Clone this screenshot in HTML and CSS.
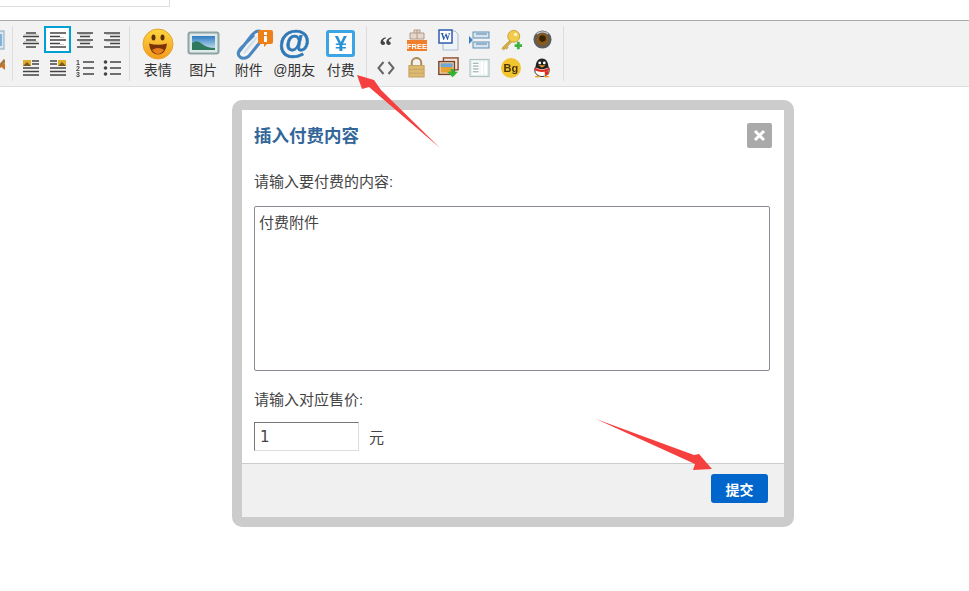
FILE: index.html
```html
<!DOCTYPE html>
<html lang="zh">
<head>
<meta charset="utf-8">
<title>插入付费内容</title>
<link rel="stylesheet" href="styles.css">
</head>
<body>
<div class="top"><div class="title-box"></div></div>
<div class="toolbar">
  <div class="group first">
    <div class="clip">
      <svg class="i" width="20" height="20" viewBox="0 0 20 20"><rect x="1" y="1" width="18" height="18" fill="#d7e6f2" stroke="#8fa9b8"/><rect x="3" y="4" width="14" height="12" fill="#7fb4d8"/></svg>
      <svg class="i" width="20" height="20" viewBox="0 0 20 20"><path d="M10 14L20 2" stroke="#a8773a" stroke-width="3"/><path d="M15 8l5-3v7z" fill="#c9762c"/></svg>
    </div>
  </div>
  <div class="sep"></div>
  <div class="group aligns">
    <div class="cell"><svg width="16" height="16" viewBox="0 0 16 16"><path d="M3 1h10M0 4.500h16M3 8h10M0 11.500h16M3 15h10" stroke="#444" stroke-width="1.300" fill="none"/><path d="M1 2.500h14M1 9.500h14" stroke="#ccc"/></svg></div>
    <div class="cell on"><svg width="18" height="16" viewBox="0 0 18 16"><path d="M1 1h16M1 4.500h10M1 8h16M1 11.500h10M1 15h16" stroke="#444" stroke-width="1.300" fill="none"/><path d="M11 5.500h4M11 12.500h4" stroke="#ccc"/></svg></div>
    <div class="cell"><svg width="16" height="16" viewBox="0 0 16 16"><path d="M0 1h16M3 4.500h10M0 8h16M3 11.500h10M0 15h16" stroke="#444" stroke-width="1.300" fill="none"/><path d="M2 2.500h12M2 9.500h12" stroke="#ccc"/></svg></div>
    <div class="cell"><svg width="16" height="16" viewBox="0 0 16 16"><path d="M0 1h16M6 4.500h10M0 8h16M6 11.500h10M0 15h16" stroke="#444" stroke-width="1.300" fill="none"/><path d="M2 2.500h14M2 9.500h14" stroke="#ccc"/></svg></div>
    <div class="cell"><svg width="16" height="16" viewBox="0 0 16 16"><rect x="0" y="0" width="8" height="6" fill="#e0ae28"/><path d="M0 6L4 2L8 6Z" fill="#7a5a20"/><path d="M9 1h7M9 4h7M0 8h16M0 11.500h16M0 15h16" stroke="#444" stroke-width="1.300"/></svg></div>
    <div class="cell"><svg width="16" height="16" viewBox="0 0 16 16"><rect x="8" y="0" width="8" height="6" fill="#e0ae28"/><path d="M8 6L12 2L16 6Z" fill="#7a5a20"/><path d="M0 1h7M0 4h7M0 8h16M0 11.500h16M0 15h16" stroke="#444" stroke-width="1.300"/></svg></div>
    <div class="cell"><svg width="18" height="18" viewBox="0 0 18 18"><text x="0" y="6" class="num">1</text><text x="0" y="12" class="num">2</text><text x="0" y="18" class="num">3</text><path d="M7 3h11M7 9h11M7 15h11" stroke="#444" stroke-width="1.300"/></svg></div>
    <div class="cell"><svg width="18" height="18" viewBox="0 0 18 18"><circle cx="2.500" cy="3" r="1.800" fill="#444"/><circle cx="2.500" cy="9" r="1.800" fill="#444"/><circle cx="2.500" cy="15" r="1.800" fill="#444"/><path d="M7 3h11M7 9h11M7 15h11" stroke="#444" stroke-width="1.300"/></svg></div>
  </div>
  <div class="sep"></div>
  <div class="group bigs">
    <div class="big">
      <svg width="32" height="34" viewBox="0 0 32 34"><defs><linearGradient id="sm" x1="0" y1="0" x2="0" y2="1"><stop offset="0" stop-color="#fcd640"/><stop offset="1" stop-color="#f39c1c"/></linearGradient></defs><circle cx="16" cy="18" r="15" fill="url(#sm)" stroke="#e8a030"/><ellipse cx="11.500" cy="11.500" rx="2" ry="3" fill="#5a3200"/><ellipse cx="20.500" cy="11.500" rx="2" ry="3" fill="#5a3200"/><path d="M7 17.500Q16 20 25 17.500Q24 28 16 28.500Q8 28 7 17.500Z" fill="#7a3208"/><path d="M10 24Q16 20 22 24Q19 28 16 28Q13 28 10 24Z" fill="#e8801c"/></svg>
      <span>表情</span>
    </div>
    <div class="big">
      <svg width="33" height="34" viewBox="0 0 33 34"><defs><linearGradient id="sky" x1="0" y1="0" x2="0" y2="1"><stop offset="0" stop-color="#2f7cc4"/><stop offset="1" stop-color="#cfe6ee"/></linearGradient></defs><rect x="1.500" y="6.500" width="30" height="21" rx="2" fill="#dfe9e9" stroke="#8ea3a3" stroke-width="2"/><rect x="5" y="10" width="23" height="14" fill="url(#sky)"/><path d="M5 17Q10 13 15 18Q20 22 28 22V24H5Z" fill="#2f7a5c"/></svg>
      <span>图片</span>
    </div>
    <div class="big">
      <svg class="clipicon" width="40" height="34" viewBox="0 0 40 34"><path d="M5 27L19 9Q24 3 29 6Q33 10 28 15L16 30Q11 34 7 31Q3 27 8 22L21 9" fill="none" stroke="#4a86c0" stroke-width="3"/><path d="M11 27L24 11" fill="none" stroke="#d3e0ea" stroke-width="2.500"/><path d="M27 4h11a2 2 0 0 1 2 2v10a2 2 0 0 1-2 2h-4l-3 3v-3h-4a2 2 0 0 1-2-2V6a2 2 0 0 1 2-2z" fill="#ef8018"/><rect x="31" y="6" width="3" height="3" fill="#fff"/><rect x="31" y="10" width="3" height="6" fill="#fff"/></svg>
      <span>附件</span>
    </div>
    <div class="big">
      <div class="at">@</div>
      <span>@朋友</span>
    </div>
    <div class="big yen-btn">
      <div class="yen">¥</div>
      <span>付费</span>
    </div>
  </div>
  <div class="sep"></div>
  <div class="group smalls">
    <div class="cell"><div class="quote">“</div></div>
    <div class="cell"><svg width="22" height="22" viewBox="0 0 22 22"><path d="M8 1h6v3h4v6H4V4h4z" fill="#e5d8cc" stroke="#b59a86"/><path d="M8 4h6M11 1v9" stroke="#b59a86"/><rect x="1" y="11" width="20" height="11" fill="#ef7f2c"/><text x="11" y="20" class="free">FREE</text></svg></div>
    <div class="cell"><svg width="21" height="22" viewBox="0 0 21 22"><path d="M5 2h12l3 3v16H5z" fill="#eef3f8" stroke="#a9bccb"/><rect x="1" y="1" width="13" height="13" fill="#fff" stroke="#2e5cb0" stroke-width="1.500"/><text x="7.500" y="11" class="w">W</text></svg></div>
    <div class="cell"><svg width="21" height="20" viewBox="0 0 21 20"><rect x="4" y="2" width="16" height="6" fill="#d8e6f0" stroke="#5f8fb2"/><rect x="4" y="12" width="16" height="6" fill="#d8e6f0" stroke="#5f8fb2"/><path d="M7 4h11M7 14h11" stroke="#4f7ea6"/><path d="M0 6l4 4-4 4z" fill="#3b7fc4"/></svg></div>
    <div class="cell"><svg width="22" height="22" viewBox="0 0 24 24"><circle cx="15" cy="8" r="6.500" fill="#f2cb4c" stroke="#c8a02c"/><circle cx="17" cy="6" r="2" fill="#fff5c8"/><path d="M11 12L2 21l2 2 2-2 1 1 2-2-1-1 5-5" fill="#d8b040" stroke="#a98a30" stroke-width=".6"/><path d="M16 18h8M20 14v8" stroke="#3cb33c" stroke-width="3"/></svg></div>
    <div class="cell"><svg width="19" height="19" viewBox="0 0 20 20"><circle cx="10" cy="10" r="9.500" fill="#5d5d5d"/><circle cx="10" cy="10" r="6.500" fill="#8a5a16"/><circle cx="10" cy="9" r="3.500" fill="#3a2406"/><path d="M4 4Q10 0 16 4" fill="none" stroke="#c9c9c9" stroke-width="1.500"/></svg></div>
    <div class="cell"><svg width="18" height="16" viewBox="0 0 18 16"><path d="M6.500 2L1.500 8L6.500 14M11.500 2L16.500 8L11.500 14" fill="none" stroke="#666" stroke-width="2"/></svg></div>
    <div class="cell"><svg width="19" height="21" viewBox="0 0 20 22"><path d="M5 9V6a5 5 0 0 1 10 0v3" fill="none" stroke="#a88a50" stroke-width="2"/><rect x="2" y="9" width="16" height="12" fill="#dcba74" stroke="#c39f58"/><path d="M2 13h16M2 17h16" stroke="#c9a45c"/></svg></div>
    <div class="cell"><svg width="22" height="22" viewBox="0 0 24 24"><rect x="7" y="1" width="16" height="13" fill="#f0e4d8" stroke="#8c4a2c" stroke-width="1.500"/><rect x="2" y="5" width="17" height="14" fill="#e9dac8" stroke="#7a3f24" stroke-width="1.500"/><rect x="4" y="7" width="13" height="10" fill="#e8a030"/><path d="M4 7h13v4H4z" fill="#6fa8d8"/><path d="M11 16h4v-3h4v3h4l-6 6z" fill="#36b336"/></svg></div>
    <div class="cell"><svg width="21" height="20" viewBox="0 0 22 20"><rect x="1" y="1" width="20" height="18" fill="#e4eeee" stroke="#a9bcbc"/><rect x="3" y="3" width="8" height="14" fill="#fff"/><path d="M4 5h6M4 8h6M4 11h6M4 14h6" stroke="#7f9a9a"/><rect x="12" y="3" width="3" height="14" fill="#fff"/><rect x="16" y="3" width="3" height="14" fill="#fff"/></svg></div>
    <div class="cell"><div class="bg">Bg</div></div>
    <div class="cell"><svg width="20" height="21" viewBox="0 0 22 22"><ellipse cx="11" cy="14" rx="8" ry="7" fill="#fff" stroke="#222"/><path d="M4 11C4 4 7 1 11 1s7 3 7 10Q11 15 4 11z" fill="#222"/><circle cx="8.500" cy="6" r="1.500" fill="#fff"/><circle cx="13.500" cy="6" r="1.500" fill="#fff"/><path d="M7 8.500h8l-4 2.500z" fill="#f0a020"/><path d="M3 11Q11 16 19 11V14Q11 18 3 14z" fill="#dd2a1e"/><path d="M14 15h4v4h-4z" fill="#dd2a1e"/><ellipse cx="6" cy="21" rx="3" ry="1" fill="#f0a020"/><ellipse cx="16" cy="21" rx="3" ry="1" fill="#f0a020"/></svg></div>
  </div>
  <div class="sep"></div>
</div>

<div class="modal">
  <div class="modal-head">
    <h2>插入付费内容</h2>
    <div class="close"><svg width="13" height="13" viewBox="0 0 13 13"><path d="M2 2L11 11M11 2L2 11" stroke="#fff" stroke-width="3"/></svg></div>
  </div>
  <div class="modal-body">
    <p class="label">请输入要付费的内容:</p>
    <textarea class="area">付费附件</textarea>
    <p class="label price-label">请输入对应售价:</p>
    <div class="price-row">
      <input class="price" type="text" value="1">
      <span class="unit">元</span>
    </div>
  </div>
  <div class="modal-foot"><button class="submit" type="button">提交</button></div>
</div>

<svg class="arrows" width="969" height="591" viewBox="0 0 969 591">
  <polygon points="440,148 381,90 374,80 357,75 362,89 369,87" fill="#f63f3f"/>
  <polygon points="596,419 694,455 699,454 712,469 693,470 695,464" fill="#f63f3f"/>
</svg>
</body>
</html>
```
FILE: styles.css
```css
* { box-sizing: border-box; }
html, body { margin: 0; padding: 0; height: 100%; background: #fff; overflow: hidden; }
body { font-family: "Liberation Sans", "Noto Sans CJK SC", sans-serif; color: #444; font-size: 15px; }

.top { height: 20px; }
.title-box { width: 170px; height: 7px; border: 1px solid #ddd; border-top: 0; border-left: 0; }

.toolbar {
  display: flex;
  height: 67px;
  background: #f2f2f2;
  border-top: 1px solid #aaa;
  border-bottom: 1px solid #ddd;
  padding: 5px 0;
  align-items: stretch;
}
.toolbar svg, .at, .yen, .quote, .bg { filter: blur(.3px); }
.sep { width: 1px; height: 55px; background: #dcdcdc; }
.group { flex: none; }
.first { width: 12px; overflow: hidden; }
.clip { margin-left: -15px; display: flex; flex-direction: column; gap: 8px; padding-top: 4px; }
.i { display: block; }
.cell { display: flex; align-items: center; justify-content: center; }

.aligns {
  display: grid;
  grid-template-columns: repeat(4, 27px);
  grid-template-rows: 27px 27px;
  gap: 1px 0;
  padding-left: 4px;
  width: 116px;
}
.cell.on { background: #fff; border: 2px solid #00a0d2; }

.bigs { display: flex; width: 236px; padding-left: 5px; }
.big { width: 45.500px; display: flex; flex-direction: column; align-items: center; justify-content: flex-end; height: 54px; }
.big svg, .at, .yen { flex: none; height: 34px; }
.big span { font-size: 14px; line-height: 18px; color: #333; white-space: nowrap; margin: 1px 0 1px; }
.yen-btn { margin-left: 1px; }
.clipicon { margin-left: 8px; }
.at {
  font-family: "Liberation Sans", sans-serif;
  font-weight: 700;
  font-size: 33px;
  line-height: 32px;
  color: #2f78b7;
  -webkit-text-stroke: .6px #2f78b7;
}
.yen {
  width: 29px;
  height: 27px;
  margin: 3px 0 3px;
  border: 3px solid #3ba4e2;
  border-radius: 3px;
  background: #fff;
  color: #2a93d6;
  font-family: "Liberation Sans", sans-serif;
  font-weight: 700;
  font-size: 22px;
  line-height: 21px;
  text-align: center;
}

.smalls {
  display: grid;
  grid-template-columns: repeat(6, 31.300px);
  grid-template-rows: 27px 27px;
  gap: 1px 0;
  padding-left: 3px;
  width: 196px;
}
.quote { font-family: "Liberation Serif", serif; font-weight: 700; font-size: 26px; line-height: 26px; height: 14px; color: #444; }
.bg {
  width: 20px;
  height: 20px;
  border-radius: 50%;
  background: #f2c530;
  font-family: "Liberation Sans", sans-serif;
  font-weight: 700;
  font-size: 11px;
  line-height: 20px;
  text-align: center;
  color: #4a3608;
}
.num { font: 700 7px "Liberation Sans", sans-serif; fill: #444; }
.free { font: 700 7.500px "Liberation Sans", sans-serif; fill: #fff; text-anchor: middle; }
.w { font: 700 10px "Liberation Serif", serif; fill: #2e5cb0; text-anchor: middle; }

.modal {
  position: absolute;
  left: 232px;
  top: 100px;
  width: 562px;
  height: 427px;
  border: 10px solid #ccc;
  border-radius: 10px;
  background: #fff;
  display: flex;
  flex-direction: column;
}
.modal-head {
  display: flex;
  justify-content: space-between;
  align-items: flex-start;
  padding: 13px 12px 0;
  height: 55px;
}
.modal-head h2 { margin: 0; font-size: 17.500px; line-height: 26px; font-weight: 700; color: #369; }
.close {
  width: 25px;
  height: 25px;
  background: #aaa;
  border-radius: 2px;
  display: flex;
  align-items: center;
  justify-content: center;
}
.modal-body { flex: 1; padding: 0 12px; }
.label { margin: 0; font-size: 15px; line-height: 34px; height: 41px; color: #444; }
.area {
  display: block;
  width: 516px;
  height: 165px;
  margin: 0;
  padding: 6px 4px;
  border: 1px solid #8a8a96;
  border-radius: 2px;
  resize: none;
  outline: 0;
  font: 15px/20px "Liberation Sans", "Noto Sans CJK SC", sans-serif;
  color: #444;
  background: #fff;
}
.price-label { margin-top: 12px; height: 39px; }
.price-row { display: flex; align-items: center; gap: 10px; height: 29px; font-size: 15px; color: #444; }
.unit { padding-bottom: 1px; }
.price {
  width: 105px;
  height: 29px;
  margin: 0;
  padding: 1px 5px;
  border: 1px solid #ddd;
  border-top-color: #777;
  border-left-color: #777;
  font: 15px "DejaVu Sans", sans-serif;
  color: #444;
  background: #fff;
  outline: 0;
}
.modal-foot {
  height: 54px;
  flex: none;
  background: #f0f0f0;
  border-top: 1px solid #ccc;
  display: flex;
  justify-content: flex-end;
  padding: 10px 16px 0 0;
}
.submit {
  width: 57px;
  height: 29px;
  margin: 0;
  padding: 0;
  border: 0;
  border-radius: 3px;
  background: #06c;
  color: #fff;
  font: 700 14px "Liberation Sans", "Noto Sans CJK SC", sans-serif;
}
.arrows { position: absolute; left: 0; top: 0; pointer-events: none; }
```
